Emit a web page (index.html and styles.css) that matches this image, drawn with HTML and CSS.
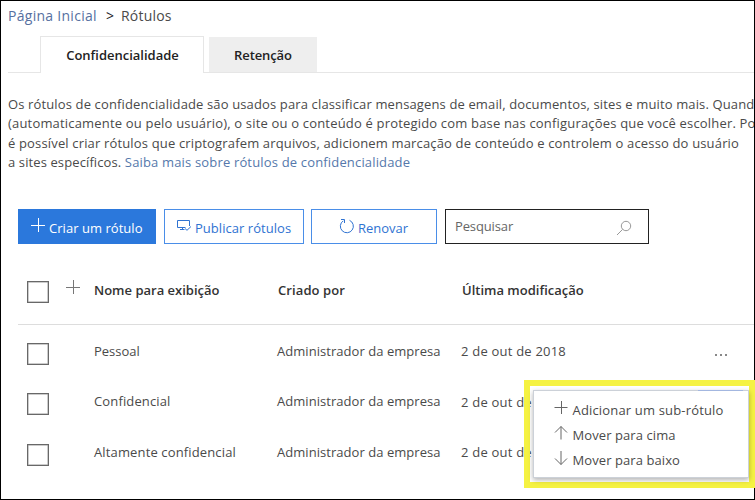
FILE: index.html
```html
<!DOCTYPE html>
<html lang="pt-BR">
<head>
<meta charset="utf-8">
<title>Rótulos</title>
<link rel="stylesheet" href="styles.css">
</head>
<body>
<main class="page">
  <nav class="breadcrumb"><a class="crumb-link">Página Inicial</a><span class="crumb-sep">&gt;</span><span class="crumb-here">Rótulos</span></nav>

  <div class="tabs">
    <div class="tab tab-active">Confidencialidade</div>
    <div class="tab tab-idle">Retenção</div>
  </div>

  <div class="intro">
    <div class="line l1">Os rótulos de confidencialidade são usados para classificar mensagens de email, documentos, sites e muito mais. Quand</div>
    <div class="line l2">(automaticamente ou pelo usuário), o site ou o conteúdo é protegido com base nas configurações que você escolher. Po</div>
    <div class="line l3">é possível criar rótulos que criptografem arquivos, adicionem marcação de conteúdo e controlem o acesso do usuário</div>
    <div class="line l4">a sites específicos. <a class="intro-link">Saiba mais sobre rótulos de confidencialidade</a></div>
  </div>

  <div class="toolbar">
    <button class="btn btn-primary">
      <svg class="icon-plus" width="16" height="16" viewBox="0 0 16 16"><path d="M8.500 1v14M1 8.500h14"/></svg>
      <span>Criar um rótulo</span>
    </button>
    <button class="btn btn-publish">
      <svg class="icon-publish" width="15" height="13" viewBox="0 0 15 13"><path d="M8.500 8.500H.5v-7h12v5.500M3 10.500h4.500M5.500 8.500v2M8 9.500l2 1.800 4-3.800"/></svg>
      <span>Publicar rótulos</span>
    </button>
    <button class="btn btn-renew">
      <svg class="icon-renew" width="16" height="16" viewBox="0 0 16 16"><path d="M10.500 2.300A6.500 6.500 0 1 1 4.300 2.800M2 1.500h3.500v3.500"/></svg>
      <span>Renovar</span>
    </button>
    <div class="search">
      <span>Pesquisar</span>
      <svg class="icon-search" width="16" height="16" viewBox="0 0 16 16"><circle cx="10" cy="6" r="4.700"/><path d="M6.600 9.400L1 15"/></svg>
    </div>
  </div>

  <div class="row row-head">
    <i class="check"></i>
    <svg class="icon-plus head-plus" width="16" height="16" viewBox="0 0 16 16"><path d="M8.500 1v14M1 8.500h14"/></svg>
    <span class="c-name">Nome para exibição</span><span class="c-by">Criado por</span><span class="c-date">Última modificação</span>
  </div>
  <div class="row row-1">
    <i class="check"></i><i></i>
    <span class="c-name">Pessoal</span><span class="c-by">Administrador da empresa</span><span class="c-date">2 de out de 2018</span>
    <svg class="more" width="14" height="4" viewBox="0 0 14 4"><path d="M0 1h2v2H0zM5 1h2v2H5zM10 1h2v2h-2z"/></svg>
  </div>
  <div class="row row-2">
    <i class="check"></i><i></i>
    <span class="c-name wide">Confidencial</span><span class="c-by">Administrador da empresa</span><span class="c-date low">2 de out de 2018</span>
  </div>
  <div class="row row-3">
    <i class="check"></i><i></i>
    <span class="c-name wide">Altamente confidencial</span><span class="c-by">Administrador da empresa</span><span class="c-date">2 de out de 2018</span>
  </div>
</main>

<div class="callout">
  <div class="menu">
    <div class="menu-item m1"><svg width="14" height="16" viewBox="0 0 14 16"><path d="M7.500 1v13M.5 7.500h13"/></svg><span>Adicionar um sub-rótulo</span></div>
    <div class="menu-item"><svg width="14" height="16" viewBox="0 0 14 16"><path d="M7 1.500v13M1 7.500l6-6 6 6"/></svg><span>Mover para cima</span></div>
    <div class="menu-item"><svg width="14" height="16" viewBox="0 0 14 16"><path d="M7 1v13.500M1 8.500l6 6 6-6"/></svg><span>Mover para baixo</span></div>
  </div>
</div>
</body>
</html>
```
FILE: styles.css
```css
* { box-sizing: border-box; }

body {
  margin: 0;
  width: 755px;
  height: 500px;
  position: relative;
  overflow: hidden;
  background: #fff;
  color: #4a4a4a;
  font: 13px/20px "Open Sans", "Noto Sans", sans-serif;
}

svg { display: block; flex: none; fill: none; stroke: currentColor; stroke-width: 1; }

.page {
  width: 755px;
  height: 500px;
  border: 1px solid #000;
  overflow: hidden;
  white-space: nowrap;
}

.breadcrumb { display: flex; height: 35px; padding: 5px 0 0 7px; font-size: 14px; letter-spacing: 0.28px; }
.crumb-link { width: 98px; color: #56709f; }
.crumb-sep { width: 15px; color: #222; }
.crumb-here { letter-spacing: 0.2px; }

.tabs {
  display: flex;
  align-items: flex-end;
  gap: 5px;
  height: 37px;
  margin-left: 7px;
  padding-left: 32px;
  border-bottom: 1px solid #e6e6e6;
}
.tab { font-weight: 600; color: #222; text-align: center; }
.tab-active {
  width: 164px;
  height: 37px;
  margin-bottom: -1px;
  padding: 8px 0 0 1px;
  border: 1px solid #e6e6e6;
  border-bottom: 0;
  background: #fff;
}
.tab-idle { width: 108px; height: 35px; padding-top: 8px; background: #eee; letter-spacing: -0.1px; }

.intro { padding: 21px 0 0 7px; }
.line { height: 19.400px; }
.l1 { letter-spacing: 0.134px; }
.l2 { letter-spacing: 0.18px; }
.l3 { letter-spacing: 0.158px; }
.l4 { letter-spacing: 0.11px; }
.intro-link { color: #5578ab; letter-spacing: 0.165px; }

.toolbar { display: flex; margin: 37px 0 0 17px; height: 35px; }
.btn {
  display: flex;
  height: 35px;
  padding: 0;
  border: 1px solid #4a8ee8;
  background: #fff;
  color: #2f73d2;
  font: inherit;
  line-height: 20px;
  letter-spacing: 0.04px;
}
.btn span { margin-top: 8px; }
.btn-primary { width: 138px; padding-left: 11px; gap: 3px; margin-right: 8px; border-color: #2b78dc; background: #2b78dc; color: #fff; }
.btn-primary svg { margin-top: 7px; }
.btn-publish { width: 140px; padding-left: 12px; gap: 3px; margin-right: 7px; }
.btn-publish svg { margin-top: 9px; }
.btn-renew { width: 126px; padding-left: 27px; gap: 3px; margin-right: 8px; letter-spacing: -0.02px; }
.btn-renew svg { margin-top: 8px; }
.search { display: flex; justify-content: space-between; width: 204px; height: 35px; padding: 6px 16px 0 9px; border: 1px solid #222; color: #666; letter-spacing: -0.13px; }
.icon-search { margin-top: 4px; color: #999; }

.row { display: grid; grid-template-columns: 37px 30px 183px 184px 254px 14px; margin-left: 26px; height: 50.500px; align-items: start; }
.row > span { margin-top: 5px; }
.check { display: block; width: 22px; height: 22px; border: 1px solid #686868; box-shadow: inset 0 0 0 0.500px #999; }
.row-head { height: 44px; margin: 37px 0 0 17px; padding-left: 9px; border-bottom: 1px solid #ddd; font-weight: 600; color: #333; }
.row-head .c-by { padding-left: 1px; letter-spacing: 0.09px; }
.row-head .c-date { padding-left: 1px; }
.row-head span { margin-top: -1px; }
.head-plus { color: #777; margin: -2px 0 0 1px; }
.row-1 { margin-top: 18px; }
.row-1 > span, .row-2 > span, .row-3 > span { margin-top: -2px; }
.row .wide { letter-spacing: 0.138px; }
.row:not(.row-head) .c-by { letter-spacing: 0.044px; }
.row:not(.row-head) .c-date { letter-spacing: 0.21px; }
.row .low { position: relative; top: 1px; }
.more { margin-top: 10px; fill: #888; stroke: none; }

.callout { position: absolute; left: 524px; top: 380px; width: 231px; height: 108px; border: 6px solid #f5f242; padding: 4px 0 0 3px; }
.menu { position: relative; width: 216px; height: 88px; padding: 9px 0 0 20px; border: 1px solid #ccd1d8; background: #fff; box-shadow: 0 2px 5px rgba(0,0,0,.3); white-space: nowrap; }
.menu::before { content: ""; position: absolute; top: -1px; right: 5px; width: 45px; height: 1px; background: #a3b7e0; }
.menu-item { display: flex; gap: 4.500px; height: 25px; letter-spacing: 0.08px; }
.m1 { letter-spacing: 0.165px; }
.menu-item svg { color: #666; }
```
